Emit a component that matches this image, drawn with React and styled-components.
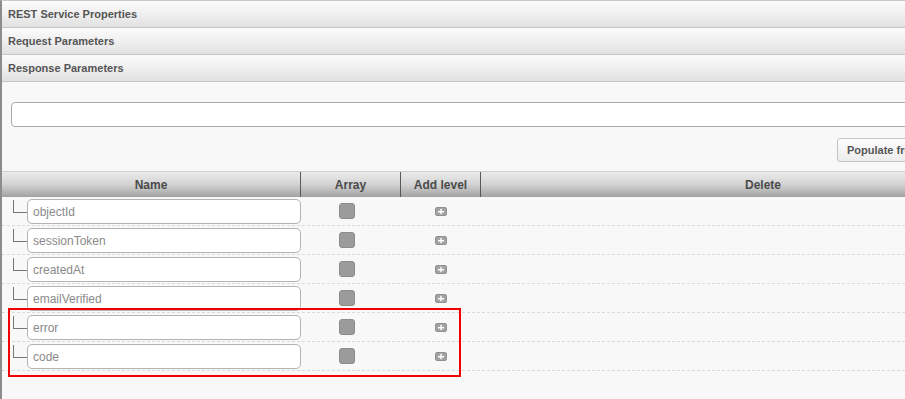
import React from "react";
import styled, { createGlobalStyle } from "styled-components";

const GlobalStyle = createGlobalStyle`
  html, body {
    margin: 0;
    padding: 0;
    overflow: hidden;
    background: #f8f8f8;
  }
  * {
    box-sizing: border-box;
  }
`;

const Panel = styled.div`
  width: 1045px;
  height: 399px;
  border-left: 2px solid #8c8c8c;
  border-top: 1px solid #c8c8c8;
  background: #f8f8f8;
  font-family: "Liberation Sans", Arial, Helvetica, sans-serif;
`;

const SectionHeader = styled.div`
  height: 27px;
  display: flex;
  align-items: center;
  padding-left: 6px;
  border-bottom: 1px solid #c6c6c6;
  background: linear-gradient(#fbfbfb, #f1f1f1 45%, #e1e1e1);
  font-size: 11px;
  font-weight: bold;
  color: #555;
`;

const Content = styled.div`
  padding-top: 20px;
`;

const UrlInput = styled.div`
  height: 25px;
  margin: 0 11px 0 9px;
  background: #fff;
  border: 1px solid #aaa;
  border-radius: 4px;
`;

const ButtonRow = styled.div`
  display: flex;
  justify-content: flex-end;
  padding: 11px 58px 0 0;
`;

const Button = styled.button`
  width: 150px;
  height: 24px;
  padding: 0 9px;
  text-align: left;
  border: 1px solid #c4c4c4;
  border-radius: 3px;
  background: linear-gradient(#fdfdfd, #ececec);
  font-family: "Liberation Sans", Arial, sans-serif;
  font-size: 11px;
  font-weight: bold;
  color: #555;
  white-space: nowrap;
`;

const Table = styled.div`
  margin-top: 9px;
  border-top: 1px solid #cfcfcf;
`;

const columns = "299px 100px 80px 1fr";

const HeadRow = styled.div`
  display: grid;
  grid-template-columns: ${columns};
  height: 25px;
  background: linear-gradient(#ececec, #d2d2d2 50%, #a2a2a2);
`;

const HeadCell = styled.div`
  display: flex;
  align-items: center;
  justify-content: center;
  font-size: 12px;
  font-weight: bold;
  color: #4a4a4a;
  border-right: ${(p) => (p.last ? "none" : "1px solid #585858")};
`;

const Body = styled.div`
  position: relative;
`;

const Row = styled.div`
  display: grid;
  grid-template-columns: ${columns};
  height: 29px;
  border-bottom: 1px dashed #dadada;
`;

const NameCell = styled.div`
  display: flex;
  align-items: flex-start;
`;

const Connector = styled.div`
  width: 14px;
  height: 13px;
  margin: 3px 0 0 11px;
  border-left: 1px solid #777;
  border-bottom: 1px solid #777;
`;

const NameInput = styled.input`
  width: 274px;
  height: 25px;
  margin-top: 2px;
  padding: 0 5px;
  background: #fff;
  border: 1px solid #b4b4b4;
  border-radius: 5px;
  font-family: "Liberation Sans", Arial, sans-serif;
  font-size: 12px;
  color: #8a8a8a;
  outline: none;
`;

const ArrayCell = styled.div`
  display: flex;
  align-items: center;
  padding-left: 38px;
`;

const Check = styled.div`
  width: 16px;
  height: 16px;
  border-radius: 3px;
  background: #9b9b9b;
  border: 1px solid #8c8c8c;
`;

const AddCell = styled.div`
  display: flex;
  align-items: center;
  justify-content: center;
  padding-top: 1px;
`;

const PlusIcon = () => (
  <svg width="12" height="9" viewBox="0 0 12 9">
    <rect x="0.5" y="0.5" width="11" height="8" rx="1.5" fill="#a3a3a3" stroke="#909090" />
    <rect x="3" y="4" width="6" height="1.4" fill="#fff" />
    <rect x="5.3" y="1.8" width="1.4" height="5.4" fill="#fff" />
  </svg>
);

const Highlight = styled.div`
  position: absolute;
  left: 6px;
  top: 111px;
  width: 453px;
  height: 69px;
  border: 2px solid #f20000;
  pointer-events: none;
`;

const fields = ["objectId", "sessionToken", "createdAt", "emailVerified", "error", "code"];

export default function App() {
  return (
    <>
      <GlobalStyle />
      <Panel>
        <SectionHeader>REST Service Properties</SectionHeader>
        <SectionHeader>Request Parameters</SectionHeader>
        <SectionHeader>Response Parameters</SectionHeader>
        <Content>
          <UrlInput />
          <ButtonRow>
            <Button>Populate from response</Button>
          </ButtonRow>
          <Table>
            <HeadRow>
              <HeadCell>Name</HeadCell>
              <HeadCell>Array</HeadCell>
              <HeadCell>Add level</HeadCell>
              <HeadCell last>Delete</HeadCell>
            </HeadRow>
            <Body>
              {fields.map((f) => (
                <Row key={f}>
                  <NameCell>
                    <Connector />
                    <NameInput defaultValue={f} readOnly />
                  </NameCell>
                  <ArrayCell>
                    <Check />
                  </ArrayCell>
                  <AddCell>
                    <PlusIcon />
                  </AddCell>
                  <div />
                </Row>
              ))}
              <Highlight />
            </Body>
          </Table>
        </Content>
      </Panel>
    </>
  );
}
